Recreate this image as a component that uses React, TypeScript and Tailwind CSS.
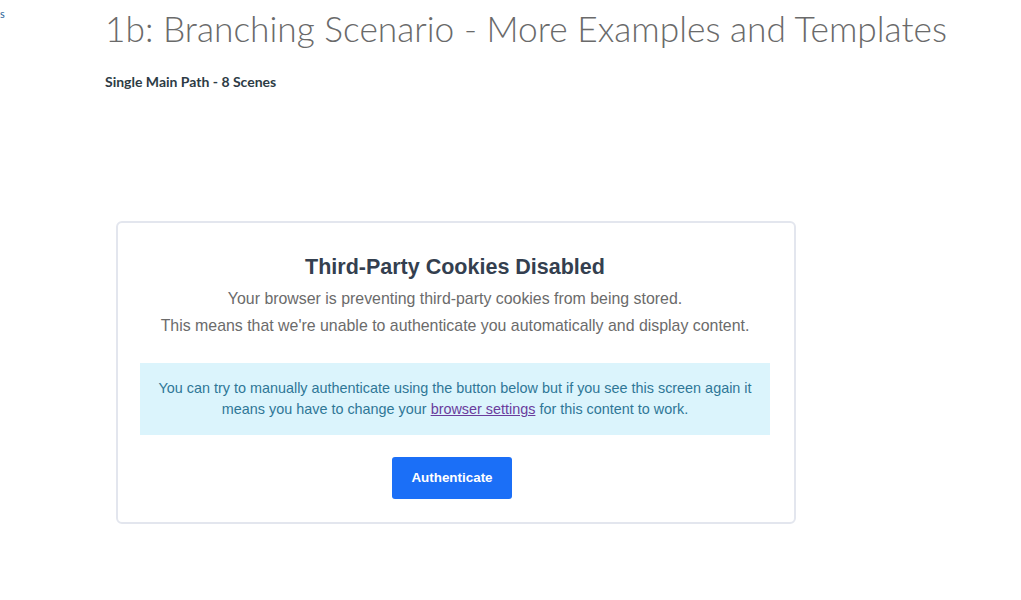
export default function App() {
  return (
    <div className="relative min-h-[600px] bg-white" style={{ fontFamily: "Lato, sans-serif" }}>
      <div className="absolute left-0 top-[6px] text-[11px] text-[#2a6496]">s</div>
      <div className="pl-[105px] pt-[7px]">
        <h1 className="text-[35.3px] font-light leading-[44px] text-[#6a6a6a]">
          1b: Branching Scenario - More Examples and Templates
        </h1>
        <div className="mt-[22px] text-[14px] font-bold leading-[18px] text-[#2d3b45]">Single Main Path - 8 Scenes</div>
      </div>
      <div className="ml-[116px] mt-[130px] w-[680px] rounded-[6px] border-2 border-[#e3e6ee] pb-[23px] pl-[22px] pr-[24px] pt-[30px]" style={{ fontFamily: "'Liberation Sans', Arial, sans-serif" }}>
        <div className="text-center">
          <h2 className="text-[21.5px] font-bold leading-[28px] text-[#343f4f]">Third-Party Cookies Disabled</h2>
          <p className="mt-[4px] text-[15.9px] leading-[27px] text-[#6b6b6b]">Your browser is preventing third-party cookies from being stored.</p>
          <p className="text-[15.9px] leading-[27px] text-[#6b6b6b]">This means that we're unable to authenticate you automatically and display content.</p>
        </div>
        <div className="mt-[24px] bg-[#dbf4fc] px-4 py-[15px] text-center text-[14.4px] leading-[21px] text-[#2f7797]">
          You can try to manually authenticate using the button below but if you see this screen again it means you have to change your{" "}
          <a className="text-[#6a3c9c] underline">browser settings</a> for this content to work.
        </div>
        <div className="mt-[22px] flex justify-center pr-[6px]">
          <button className="h-[42px] w-[120px] rounded-[3px] bg-[#1b6ff7] text-[13.4px] font-bold text-white">Authenticate</button>
        </div>
      </div>
    </div>
  );
}
